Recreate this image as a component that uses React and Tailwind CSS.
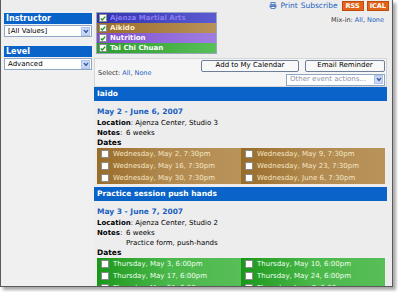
import React from "react";

const font = { fontFamily: '"DejaVu Sans", Verdana, sans-serif' };

const Box = ({ checked }) => (
  <span className="w-[8px] h-[8px] bg-white border border-[#8a8a8a] flex items-center justify-center shrink-0">
    {checked && (
      <svg width="7" height="7" viewBox="0 0 8 8">
        <path d="M1 4 L3 6 L7 1.5" stroke="#1a9a1a" strokeWidth="1.8" fill="none" />
      </svg>
    )}
  </span>
);

const Select = ({ label, muted, className }) => (
  <div className={"h-[12px] bg-white border border-[#8fa6c4] flex items-center " + className}>
    <span className={"flex-1 pl-[3px] text-[7px] leading-none truncate " + (muted ? "text-[#8a93a8]" : "text-black")}>
      {label}
    </span>
    <span className="w-[9px] h-[9px] mr-px bg-[#c9d8f6] border border-[#b0c4ea] flex items-center justify-center">
      <svg width="6" height="5" viewBox="0 0 6 5">
        <path d="M1 1 L3 3.5 L5 1" stroke="#3a5aa0" strokeWidth="1.3" fill="none" />
      </svg>
    </span>
  </div>
);

const SideHeader = ({ children }) => (
  <div className="bg-[#0a63c9] text-white font-bold text-[8px] leading-[11px] h-[11px] pl-[2px]">{children}</div>
);

const categories = [
  { name: "Ajenza Martial Arts", cls: "from-[#3030b0] to-[#5c5cd2] text-[#8d7df0]" },
  { name: "Aikido", cls: "from-[#9a6c28] to-[#b89258] text-[#fbf0d8]" },
  { name: "Nutrition", cls: "from-[#7e4ed0] to-[#a07ee0] text-white" },
  { name: "Tai Chi Chuan", cls: "from-[#2a9c2a] to-[#58c058] text-white" },
];

const Event = ({ title, range, location, notes, extra, dates, tone }) => (
  <div>
    <div className="bg-[#0a63c9] text-white font-bold text-[7.5px] leading-[14px] h-[14px] pl-[3px]">{title}</div>
    <div className="pl-[3px] pr-[2px] pt-[5px]">
      <div className="text-[#1a5fc0] font-bold text-[7.5px] leading-[11px]">{range}</div>
      <div className="text-[7px] leading-[10px] text-black mt-px">
        <span className="font-bold">Location</span>: {location}
      </div>
      <div className="text-[7px] leading-[10px] text-black flex">
        <span className="w-[29px] shrink-0">
          <span className="font-bold">Notes</span>:
        </span>
        <div>
          <div>{notes}</div>
          {extra && <div>{extra}</div>}
        </div>
      </div>
      <div className="text-[7.5px] font-bold leading-[10px] text-black">Dates</div>
      <div className="grid grid-cols-2">
        {dates.map((d) => (
          <div
            key={d}
            className={
              "h-[12px] flex items-center gap-[4px] pl-[4px] bg-linear-to-r " +
              (tone === "brown"
                ? "from-[#9a6c28] via-[#b28a50] to-[#b8935a] text-[#f3e7c8]"
                : "from-[#179817] via-[#4ab84a] to-[#58be58] text-[#f0fff0]")
            }
          >
            <Box />
            <span className="text-[7px] leading-none">{d}</span>
          </div>
        ))}
      </div>
    </div>
  </div>
);

export default function App() {
  return (
    <div className="w-[398px] h-[292px] bg-white overflow-hidden" style={font}>
      <div className="w-[393px] h-[287px] bg-[#ededed] border-l border-r border-b border-[#5a5a5a] shadow-[3px_3px_3px_rgba(0,0,0,0.35)] overflow-hidden flex flex-col">
        {/* top bar */}
        <div className="h-[11px] flex items-center justify-end gap-[3px] pr-[3px] shrink-0">
          <svg width="8" height="7" viewBox="0 0 8 7">
            <rect x="2" y="0.5" width="4" height="2" fill="none" stroke="#3a6ab8" strokeWidth="0.8" />
            <rect x="0.5" y="2.5" width="7" height="3" fill="#6a8ad0" />
            <rect x="2" y="4.5" width="4" height="2" fill="#fff" stroke="#3a6ab8" strokeWidth="0.8" />
          </svg>
          <span className="text-[#1a5fc0] text-[7.5px] leading-none">Print</span>
          <span className="text-[#1a5fc0] text-[7.5px] leading-none">Subscribe</span>
          <span className="bg-[#e0641a] text-white font-bold text-[6.5px] leading-[8px] px-[3px] border border-[#c04a0a] ml-[1px]">RSS</span>
          <span className="bg-[#e0641a] text-white font-bold text-[6.5px] leading-[8px] px-[2px] border border-[#c04a0a]">ICAL</span>
        </div>

        <div className="flex flex-1 min-h-0">
          {/* sidebar */}
          <div className="w-[93px] shrink-0 pl-[3px] pr-[2px] pt-[2px] bg-[#f0f0f0]">
            <SideHeader>Instructor</SideHeader>
            <Select label="[All Values]" className="mt-px" />
            <div className="h-[9px]" />
            <SideHeader>Level</SideHeader>
            <Select label="Advanced" className="mt-px" />
          </div>

          {/* main */}
          <div className="flex-1 pr-[5px] min-w-0">
            <div className="flex justify-between pt-px">
              <div className="w-[121px] border border-[#9aa8bc] bg-white ml-[2px]">
                {categories.map((c) => (
                  <div
                    key={c.name}
                    className={"h-[10px] flex items-center gap-[3px] pl-[2px] bg-linear-to-r font-bold text-[7px] " + c.cls}
                  >
                    <Box checked />
                    <span className="leading-none">{c.name}</span>
                  </div>
                ))}
              </div>
              <div className="text-[6.5px] text-[#333] pt-[4px] pr-[3px]">
                Mix-in: <span className="text-[#1a5fc0]">All</span>, <span className="text-[#1a5fc0]">None</span>
              </div>
            </div>

            {/* actions */}
            <div className="mt-[4px] h-[29px] bg-[#f5f5f5] border border-[#d6d6d6] flex items-center justify-between pl-[3px] pr-px">
              <div className="text-[6.5px] text-[#333] pt-[3px]">
                Select: <span className="text-[#1a5fc0]">All</span>, <span className="text-[#1a5fc0]">None</span>
              </div>
              <div className="flex flex-col items-end gap-[2px]">
                <div className="flex gap-[6px]">
                  <button className="w-[98px] h-[12px] bg-[#f8f8f8] border border-[#6f7f99] rounded-[2px] text-[7px] leading-none text-black">
                    Add to My Calendar
                  </button>
                  <button className="w-[80px] h-[12px] bg-[#f8f8f8] border border-[#6f7f99] rounded-[2px] text-[7px] leading-none text-black">
                    Email Reminder
                  </button>
                </div>
                <Select label="Other event actions..." muted className="w-[99px]" />
              </div>
            </div>

            <Event
              title="Iaido"
              range="May 2 - June 6, 2007"
              location="Ajenza Center, Studio 3"
              notes="6 weeks"
              tone="brown"
              dates={[
                "Wednesday, May 2, 7:30pm",
                "Wednesday, May 9, 7:30pm",
                "Wednesday, May 16, 7:30pm",
                "Wednesday, May 23, 7:30pm",
                "Wednesday, May 30, 7:30pm",
                "Wednesday, June 6, 7:30pm",
              ]}
            />
            <div className="h-[3px]" />
            <Event
              title="Practice session push hands"
              range="May 3 - June 7, 2007"
              location="Ajenza Center, Studio 2"
              notes="6 weeks"
              extra="Practice form, push-hands"
              tone="green"
              dates={[
                "Thursday, May 3, 6:00pm",
                "Thursday, May 10, 6:00pm",
                "Thursday, May 17, 6:00pm",
                "Thursday, May 24, 6:00pm",
                "Thursday, May 31, 6:00pm",
                "Thursday, June 7, 6:00pm",
              ]}
            />
          </div>
        </div>
      </div>
    </div>
  );
}
